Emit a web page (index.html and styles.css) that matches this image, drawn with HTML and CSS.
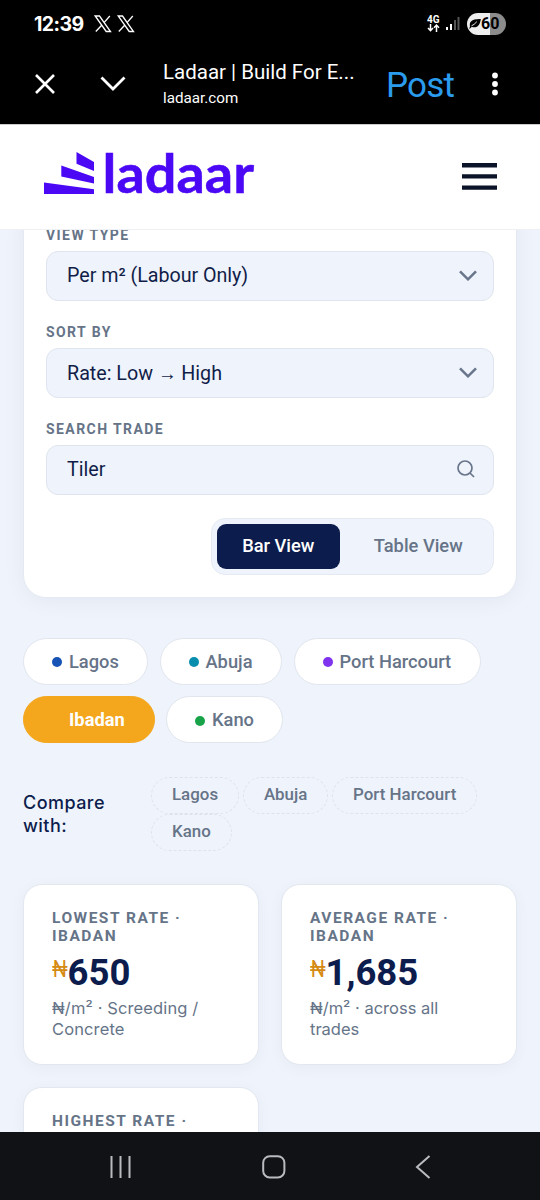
FILE: index.html
```html
<!DOCTYPE html>
<html lang="en">
<head>
<meta charset="utf-8">
<title>Ladaar</title>
<link rel="stylesheet" href="styles.css">
</head>
<body>
<div class="phone">
  <div class="system">
    <div class="status">
      <span class="clock">12:39</span>
      <svg class="x-logos" width="42" height="18" viewBox="0 0 42 18" fill="none" stroke="#fff" stroke-width="1.3"><path d="M1.2 1h4.3l11 15.5h-4.3zM15.8 1L9.8 7.9M7.9 10L1.8 16.5"/><path d="M24.2 1h4.3l11 15.5h-4.3zM38.8 1L32.8 7.9M30.9 10L24.8 16.5"/></svg>
      <div class="status-right">
        <div class="network"><span>4G</span><svg width="13" height="8" viewBox="0 0 13 8" fill="none" stroke="#fff" stroke-width="1.5"><path d="M3.5 0v6.5M1 4l2.5 2.7L6 4M9.5 8V1.2M7 3.8l2.5-2.7L12 3.8"/></svg></div>
        <svg class="signal" width="14" height="15" viewBox="0 0 14 15"><path fill="#fff" d="M0 11h2v3H0zM4 8h2v6H4z"/><path fill="#555" d="M8 4h2v10H8zM11.5 1h2v13h-2z"/></svg>
        <div class="battery"><svg width="12" height="11" viewBox="0 0 12 11"><path fill="#000" d="M1 8.7C.2 4 2 .8 11.8 1c-.3 2-1 7.2-5.2 8.2-1.5.4-3 0-3.7-.4L1 10.5H0z"/><path d="M2.5 7.8Q5 7 7.8 3.7" stroke="#eee" fill="none"/></svg><span>60</span></div>
      </div>
    </div>
    <div class="browser">
      <svg class="close" width="20" height="20" viewBox="0 0 20 20" fill="none" stroke="#fff" stroke-width="2.6"><path d="M1 1l18 18M19 1L1 19"/></svg>
      <svg class="collapse" width="26" height="16" viewBox="0 0 26 16" fill="none" stroke="#fff" stroke-width="2.8"><path d="M1.5 1.5L13 13 24.5 1.5"/></svg>
      <div class="page-info"><div class="page-title">Ladaar | Build For E...</div><div class="page-url">ladaar.com</div></div>
      <div class="post">Post</div>
      <svg class="more" width="6" height="24" viewBox="0 0 6 24" fill="#fff"><circle cx="3" cy="3.5" r="2.9"/><circle cx="3" cy="12" r="2.9"/><circle cx="3" cy="20.5" r="2.9"/></svg>
    </div>
  </div>
  <header class="site-header">
    <svg class="logo" width="216" height="56" viewBox="0 0 216 56" fill="#4b08f5"><path d="M32.5 0l17.5 10v9L32.5 11.8zM17.3 13.5L50 25v6.5L17.3 24.5zM0 30.5l50 6.7V42H0z"/><text x="58.5" y="41" textLength="151.5" lengthAdjust="spacingAndGlyphs">ladaar</text></svg>
    <svg class="menu" width="35" height="27" viewBox="0 0 35 27" fill="#0b1428"><path d="M0 0h35v4.4H0zM0 11.2h35v4.4H0zM0 22.4h35v4.4H0z"/></svg>
  </header>
  <main class="content">
    <section class="filters">
      <div class="label">VIEW TYPE</div>
      <div class="field"><span class="per">Per m² (Labour Only)</span><svg class="chevron" width="18" height="11" viewBox="0 0 18 11"><path d="M1 1.3l8 8 8-8"/></svg></div>
      <div class="label">SORT BY</div>
      <div class="field"><span>Rate: Low <span class="arrow">→</span> High</span><svg class="chevron" width="18" height="11" viewBox="0 0 18 11"><path d="M1 1.3l8 8 8-8"/></svg></div>
      <div class="label">SEARCH TRADE</div>
      <div class="field"><span>Tiler</span><svg class="search" width="18" height="18" viewBox="0 0 18 18"><circle cx="8" cy="8" r="7"/><path d="M13 13l4 4"/></svg></div>
      <div class="toggle"><div class="tab active">Bar View</div><div class="tab">Table View</div></div>
    </section>
    <section class="cities">
      <div class="chip lagos"><i></i><span>Lagos</span></div>
      <div class="chip abuja"><i></i><span>Abuja</span></div>
      <div class="chip port"><i></i><span>Port Harcourt</span></div>
      <div class="chip ibadan"><i></i><span>Ibadan</span></div>
      <div class="chip kano"><i></i><span>Kano</span></div>
    </section>
    <section class="compare">
      <div class="compare-label">Compare<br>with:</div>
      <div class="options"><span class="option">Lagos</span><span class="option">Abuja</span><span class="option">Port Harcourt</span><span class="option">Kano</span></div>
    </section>
    <section class="stats">
      <article class="stat"><h2>LOWEST RATE ·<br>IBADAN</h2><div class="amount"><span class="naira">₦</span><b>650</b></div><p class="wide">₦/m² · Screeding /<br>Concrete</p></article>
      <article class="stat"><h2>AVERAGE RATE ·<br>IBADAN</h2><div class="amount"><span class="naira">₦</span><b>1,685</b></div><p>₦/m² · across all<br>trades</p></article>
      <article class="stat"><h2>HIGHEST RATE ·</h2></article>
    </section>
  </main>
  <nav class="nav">
    <svg width="22" height="22" viewBox="0 0 22 22"><path d="M1.5 0v22M10.5 0v22M19.5 0v22"/></svg>
    <svg width="24" height="24" viewBox="0 0 24 24"><rect x="1.2" y="1.2" width="21.2" height="21.2" rx="6.5"/></svg>
    <svg width="16" height="24" viewBox="0 0 16 24"><path d="M14.5 1L2 12l12.5 11"/></svg>
  </nav>
</div>
</body>
</html>
```
FILE: styles.css
```css
* { box-sizing: border-box; }
body { margin: 0; background: #000; font-family: Roboto, "Liberation Sans", sans-serif; }
svg { display: block; flex: none; }
.phone { width: 540px; height: 1200px; display: flex; flex-direction: column; overflow: hidden; }
.system { height: 124px; flex: none; background: #000; color: #fff; }
.status { display: flex; align-items: center; height: 46px; padding: 1px 34px 0 34px; }
.clock { width: 59.5px; font: 700 19.5px/24px Inter, sans-serif; letter-spacing: -.55px; white-space: nowrap; }
.status-right { margin-left: auto; display: flex; align-items: center; }
.network { width: 14px; margin-right: 5px; font: 700 10px/9px Roboto, sans-serif; }
.network span { display: block; }
.signal { margin-right: 7px; }
.battery { display: flex; align-items: center; width: 39px; height: 22px; padding-left: 2px; border-radius: 11px; background: linear-gradient(90deg, #eee 60%, #8c8c8c 60%); color: #000; font: 700 16px/22px Roboto, sans-serif; }
.browser { display: flex; align-items: center; height: 76px; padding: 0 42px 0 35px; }
.collapse { margin-left: 45px; }
.page-info { width: 210px; margin: 3px 0 0 37px; white-space: nowrap; }
.page-title { font-size: 20.5px; line-height: 26px; }
.page-url { font-size: 15.2px; line-height: 27px; }
.post { width: 80px; margin: 3px 0 0 13px; color: #2b9bed; font-size: 35px; line-height: 44px; letter-spacing: -.8px; }
.more { margin-left: auto; }
.site-header { position: relative; z-index: 1; display: flex; flex: none; height: 106px; padding: 27px 43px 0 44px; border-top: 1px solid #ccc; border-bottom: 1px solid #eef0f4; background: #fff; justify-content: space-between; }
.logo text { font: 700 53px Lato, sans-serif; stroke: #4b08f5; stroke-width: .5px; }
.menu { margin-top: 11px; }
.content { flex: 1; min-height: 0; overflow: hidden; padding: 0 23px; background: #eff3fb; }
.filters { height: 399px; margin-top: -31px; padding: 27px 22px 0; border: 1px solid #e5eaf2; border-radius: 23px; background: #fff; box-shadow: 0 3px 22px rgba(13,29,77,.05); }
.label { height: 17px; margin-bottom: 7px; color: #667488; font-weight: 700; font-size: 14px; line-height: 17px; letter-spacing: 1.42px; }
.field { display: flex; align-items: center; justify-content: space-between; height: 50px; margin-bottom: 23px; padding: 0 16px 2px 20px; border: 1.4px solid #dfe5ee; border-radius: 12px; background: #eff3fb; color: #111d49; font-size: 19.7px; }
.per { letter-spacing: -.03px; }
.field svg { fill: none; stroke: #68758b; stroke-width: 2.5; }
.field .search { margin-right: 2px; stroke-width: 1.7; }
.arrow { font-family: "Noto Sans", sans-serif; font-size: 18.5px; }
.toggle { display: flex; width: 283px; height: 57px; margin-left: auto; padding: 5px; border: 1.4px solid #e5eaf2; border-radius: 14px; background: #eff3fb; }
.tab { width: 149px; border-radius: 9px; color: #667488; font-weight: 500; font-size: 18.3px; line-height: 44px; text-align: center; padding-left: 9px; }
.tab.active { width: 123px; background: #0c1c4c; color: #fff; padding: 0; }
.cities { display: flex; flex-wrap: wrap; gap: 11.5px; height: 105px; margin-top: 40px; }
.chip { display: flex; align-items: center; height: 46.8px; padding-left: 28px; border: 1.4px solid #e1e6ee; border-radius: 24px; background: #fff; color: #667488; font-weight: 500; font-size: 18.3px; }
.chip i { width: 10px; height: 10px; margin: 2px 7px 0 0; border-radius: 50%; background: #1753b5; }
.lagos { width: 125px; }
.abuja { width: 122.5px; }
.port { width: 187px; }
.ibadan { width: 131.5px; border-color: #f4a71d; background: #f4a71d; color: #fff; font-weight: 700; }
.kano { width: 117px; }
.abuja i { background: #078eae; }
.port i { background: #8033ee; }
.ibadan i { background: #f4a71d; }
.kano i { background: #18a34a; }
.compare { display: flex; height: 74px; margin-top: 34px; align-items: center; }
.compare-label { width: 128px; color: #0c1c4c; font: 500 18px/23px Inter, sans-serif; letter-spacing: .45px; }
.options { display: flex; flex-wrap: wrap; column-gap: 3.8px; width: 340px; }
.option { height: 37px; padding: 0 20px; border: 1.4px dashed #dde3ec; border-radius: 19px; color: #667488; font-weight: 500; font-size: 16.9px; line-height: 33px; }
.stats { display: grid; grid-template-columns: 236px 236px; gap: 22px; margin-top: 33px; }
.stat { height: 181px; padding: 24px 28px; border: 1px solid #e2e8f0; border-radius: 19px; background: #fff; box-shadow: 0 3px 15px rgba(13,29,77,.04); white-space: nowrap; }
.stat h2 { margin: 0; color: #667488; font-weight: 700; font-size: 15.5px; line-height: 18px; letter-spacing: 1.5px; }
.amount { display: flex; height: 53px; color: #0c1c4c; font-size: 36.5px; line-height: 55px; }
.naira { width: 15.5px; margin-top: -3px; color: #d58a13; font-size: 23px; font-weight: 400; transform: scaleX(.86); transform-origin: left; }
.stat p { margin: 0; color: #667488; font: 400 16.5px/21px Inter, sans-serif; }
.stat .wide { letter-spacing: .12px; }
.nav { display: flex; flex: none; height: 68px; padding: 2px 109px 0 110px; align-items: center; justify-content: space-between; background: #101216; }
.nav svg { fill: none; stroke: #b9bbc0; stroke-width: 2; }
```
